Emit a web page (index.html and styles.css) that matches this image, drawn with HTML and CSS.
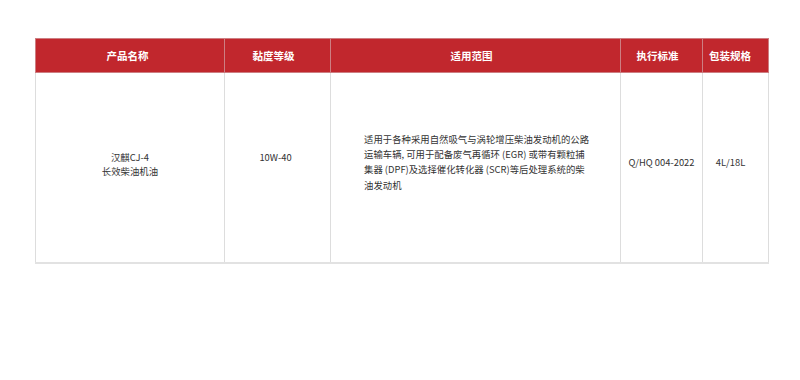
FILE: index.html
```html
<!DOCTYPE html>
<html lang="zh">
<head>
<meta charset="utf-8">
<title>产品规格</title>
<link rel="stylesheet" href="styles.css">
</head>
<body>
<div class="page">
  <table class="spec">
    <colgroup>
      <col class="c-name">
      <col class="c-grade">
      <col class="c-scope">
      <col class="c-std">
      <col class="c-pack">
    </colgroup>
    <thead>
      <tr>
        <th>产品名称</th>
        <th>黏度等级</th>
        <th>适用范围</th>
        <th>执行标准</th>
        <th>包装规格</th>
      </tr>
    </thead>
    <tbody>
      <tr>
        <td class="name">汉麒CJ-4<br>长效柴油机油</td>
        <td class="grade">10W-40</td>
        <td class="scope"><p>适用于各种采用自然吸气与涡轮增压柴油发动机的公路运输车辆, 可用于配备废气再循环 (EGR) 或带有颗粒捕集器 (DPF)及选择催化转化器 (SCR)等后处理系统的柴油发动机</p></td>
        <td class="std">Q/HQ 004-2022</td>
        <td class="pack">4L/18L</td>
      </tr>
    </tbody>
  </table>
</div>
</body>
</html>
```

FILE: styles.css
```css
html, body {
  margin: 0;
  padding: 0;
  background: #ffffff;
}

.page {
  padding: 38px 32px 0 35px;
  font-family: "Noto Sans CJK SC", "Noto Sans", sans-serif;
}

.spec {
  width: 733px;
  border-collapse: collapse;
  table-layout: fixed;
}

.c-name { width: 189px; }
.c-grade { width: 106px; }
.c-scope { width: 290px; }
.c-std { width: 82px; }
.c-pack { width: 66px; }

.spec th {
  height: 33px;
  padding: 0 8px 0 0;
  background: #c1272d;
  color: #ffffff;
  font-size: 10.5px;
  font-weight: 700;
  text-align: center;
  vertical-align: middle;
  border: 1px solid #cd7e82;
}

.spec th:first-child {
  padding-right: 5px;
}

.spec th:last-child {
  padding-right: 11px;
}

.spec td {
  height: 190px;
  padding: 0 0 10px;
  font-size: 9.4px;
  line-height: 14px;
  color: #333333;
  text-align: center;
  vertical-align: middle;
  border: 1px solid #dddddd;
  border-bottom: 2px solid #e2e2e2;
  box-sizing: border-box;
}

.spec td.grade {
  padding-bottom: 21px;
  padding-right: 4px;
}

.spec td.name {
  padding-bottom: 7px;
}

.spec td.scope {
  text-align: left;
  padding-left: 33px;
  padding-right: 28px;
}

.scope p {
  margin: 0;
  line-height: 15.3px;
}

.spec td.pack {
  padding-right: 10px;
}
```
